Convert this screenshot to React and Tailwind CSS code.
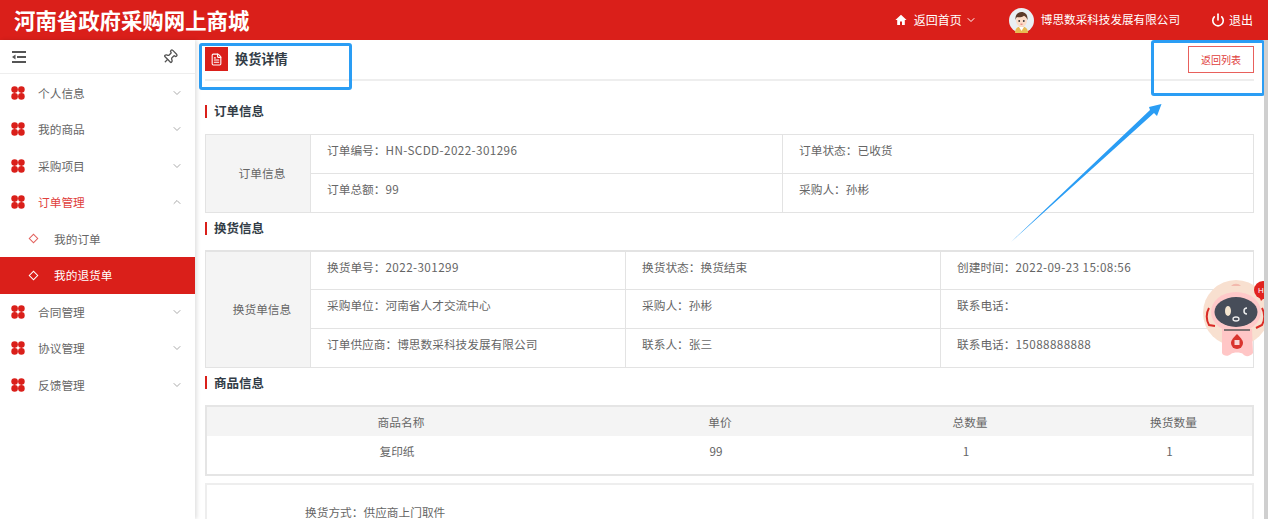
import React from "react";
import { ChevronDown, ChevronUp, FileText, Pin, Power } from "lucide-react";

const menus = [
  { name: "个人信息" },
  { name: "我的商品" },
  { name: "采购项目" },
  { name: "订单管理", open: true },
  { name: "我的订单", sub: true },
  { name: "我的退货单", sub: true, active: true },
  { name: "合同管理" },
  { name: "协议管理" },
  { name: "反馈管理" },
];

const Flower = () => (
  <svg width="14" height="14" viewBox="0 0 14 14" className="shrink-0">
    <circle cx="3.6" cy="3.6" r="3.3" fill="#da1f1a" />
    <circle cx="10.4" cy="3.6" r="3.3" fill="#da1f1a" />
    <circle cx="3.6" cy="10.4" r="3.3" fill="#da1f1a" />
    <circle cx="10.4" cy="10.4" r="3.3" fill="#da1f1a" />
  </svg>
);

const Avatar = () => (
  <svg width="25" height="25" viewBox="0 0 25 25" className="shrink-0">
    <circle cx="12.5" cy="12.5" r="12.5" fill="#e9eff3" />
    <path d="M6 25c0-5 3-6.5 6.5-6.5S19 20 19 25z" fill="#e8bb52" />
    <path d="M10 19h5l-2.500 4z" fill="#fff" />
    <ellipse cx="12.500" cy="12.500" rx="5.500" ry="6.500" fill="#fbdcc8" />
    <path d="M6.500 12C6 6.500 9 4 12.500 4s6.500 2.500 6 8c-.8-2-2-3.600-3.500-4.200C13 9.500 9 9.500 8 9c-.8.800-1.200 1.800-1.500 3z" fill="#5b3a29" />
    <circle cx="10.200" cy="13" r=".9" fill="#333" />
    <circle cx="14.800" cy="13" r=".9" fill="#333" />
    <path d="M11.500 16.200h2" stroke="#d9534f" strokeWidth=".8" />
  </svg>
);

const MenuFold = () => (
  <svg width="16" height="14" viewBox="0 0 16 14" className="shrink-0">
    <path d="M1 2h14M6 7h9M1 12h14" stroke="#555" strokeWidth="2" />
    <path d="M1 7l3.500-2.500v5z" fill="#555" />
  </svg>
);

const Robot = () => (
  <svg width="68" height="84" viewBox="0 0 68 84" className="absolute left-[1200px] top-[278px]">
    <circle cx="36" cy="35" r="33" fill="#f8e0d0" />
    <path d="M31 8a6 5 0 0 1 10 0z" fill="#f2b9ad" />
    <ellipse cx="36" cy="34" rx="25" ry="20" fill="#ffc9c9" />
    <ellipse cx="36" cy="34" rx="21.500" ry="15" fill="#474d59" />
    <ellipse cx="28" cy="33" rx="3" ry="5" fill="#f5e6d0" />
    <path d="M47 30c-4 0-4 6 0 6" fill="none" stroke="#eee" strokeWidth="1.500" />
    <ellipse cx="36" cy="41" rx="3" ry="2" fill="none" stroke="#eee" strokeWidth="1.300" />
    <path d="M9 30c-3 5-3 12 0 17l6 1" fill="none" stroke="#da2b26" strokeWidth="2" />
    <path d="M62 30c3 5 3 12 0 17l-6 3" fill="none" stroke="#da2b26" strokeWidth="2" />
    <path d="M22 51h30l1 24c-3 4-8 4-10 1-2-2-10-2-12 0-3 3-8 2-9-1z" fill="#ffc6c6" />
    <path d="M24 52h26" stroke="#555" strokeWidth="1.500" />
    <path d="M37 56c5 5 6 7 6 9a6 6 0 0 1-12 0c0-2 1-4 6-9z" fill="#d9342e" />
    <rect x="34.500" y="62" width="5" height="5" fill="#fff" opacity=".8" />
    <circle cx="63" cy="12" r="9" fill="#e1231f" />
    <path d="M59 18l2 5 4-4z" fill="#e1231f" />
    <text x="58" y="15" fontSize="8" fill="#fff" fontFamily="Liberation Sans, sans-serif">H</text>
  </svg>
);

const SectionTitle = ({ title, className }) => (
  <div className={`flex items-center h-4 ${className}`}>
    <span className="w-[2px] h-[13px] bg-[#da1f1a]" />
    <span className="ml-[7px] text-[12.5px] font-bold text-[#333d47]">{title}</span>
  </div>
);

// latin values sit a little wider than the CJK label
const Cell = ({ text }) => {
  const [label, value] = text.split("：");
  return (
    <>
      {label}：
      <span className={/^[\x00-\x7f]+$/.test(value) ? "tracking-[0.4px]" : ""}>{value}</span>
    </>
  );
};

const InfoTable = ({ label, rows, columns, rowClass, topClass }) => (
  <div className={`flex border border-[#e3e3e3] ${topClass}`}>
    <div className="w-[105px] shrink-0 bg-[#f4f4f4] border-r border-[#e3e3e3] flex items-center justify-center pl-[8px] pb-[2px]">
      {label}
    </div>
    <div className="flex-1">
      {rows.map((row, i) => (
        <div
          key={i}
          className={`grid ${rowClass} ${columns} ${i < rows.length - 1 ? "border-b border-[#e3e3e3]" : ""}`}
        >
          {row.map((cell, j) => (
            <div key={j} className={`pl-[16px] pt-[7px] leading-4 ${j > 0 ? "border-l border-[#e3e3e3]" : ""}`}>
              <Cell text={cell} />
            </div>
          ))}
        </div>
      ))}
    </div>
  </div>
);

export default function App() {
  return (
    <div
      className="relative w-full h-[519px] overflow-hidden bg-white text-[11.7px] text-[#666]"
      style={{ fontFamily: '"Noto Sans CJK SC", "Noto Sans", sans-serif' }}
    >
      <header className="h-[40px] bg-[#da1f1a] flex items-center text-white pl-[14px] pr-[15px]">
        <h1 className="text-[21.4px] font-bold">河南省政府采购网上商城</h1>
        <div className="ml-auto flex items-center">
          <svg width="12" height="12" viewBox="0 0 12 12" className="mr-[7px]">
            <path d="M6 .8L.4 6h1.800v5h2.800V7.500h2V11h2.800V6h1.800z" fill="#fff" />
          </svg>
          <span className="text-[12px]">返回首页</span>
          <ChevronDown size={12} className="ml-[3px]" />
          <span className="ml-[32px]"><Avatar /></span>
          <span className="ml-[7px] text-[11.6px]">博思数采科技发展有限公司</span>
          <Power size={14} strokeWidth={2.8} className="ml-[31px]" />
          <span className="ml-[4px] text-[12px]">退出</span>
        </div>
      </header>

      <div className="flex h-[479px]">
        <aside className="w-[195px] shrink-0 shadow-[2px_0_4px_rgba(0,0,0,0.12)] z-10 bg-white">
          <div className="h-[34px] mb-[0.5px] flex items-center justify-between pl-[11px] pr-[17px] border-b border-[#eeeeee]">
            <MenuFold />
            <Pin size={16} className="rotate-45 text-[#555]" />
          </div>
          {menus.map((m) => (
            <div
              key={m.name}
              className={`h-[36.5px] flex items-center ${m.active ? "bg-[#da1f1a] text-white" : ""} ${m.sub ? "pl-[30px]" : "pl-[11px] pr-[12px]"}`}
            >
              {m.sub ? (
                <>
                  <span
                    className={`w-[7px] h-[7px] rotate-45 border-[1.5px] ${m.active ? "border-white" : "border-[#e2605c]"}`}
                  />
                  <span className="ml-[17px]">{m.name}</span>
                </>
              ) : (
                <>
                  <Flower />
                  <span className={`ml-[13px] ${m.open ? "text-[#e0403c]" : ""}`}>{m.name}</span>
                  {m.open ? (
                    <ChevronUp size={12} className="ml-auto text-[#aaa]" />
                  ) : (
                    <ChevronDown size={12} className="ml-auto text-[#aaa]" />
                  )}
                </>
              )}
            </div>
          ))}
        </aside>

        <main className="flex-1 pl-[10px] pr-[14px]">
          <div className="h-[41px] flex justify-between border-b-2 border-[#eeeeee]">
            <div className="flex items-start pt-[7px]">
              <span className="w-[23px] h-[24px] bg-[#da1f1a] flex items-center justify-center">
                <FileText size={13} className="text-white" />
              </span>
              <span className="ml-[7px] text-[13.2px] leading-[24px] font-bold text-[#333d47]">换货详情</span>
            </div>
            <button className="mt-[6px] w-[66px] h-[27px] border border-[#e8605c] text-[10px] text-[#e0403c]">
              返回列表
            </button>
          </div>

          <SectionTitle title="订单信息" className="mt-[22px] mb-[15px]" />
          <InfoTable
            label="订单信息"
            columns="grid-cols-[471px_1fr]"
            rowClass="h-[38.5px]"
            rows={[
              ["订单编号：HN-SCDD-2022-301296", "订单状态：已收货"],
              ["订单总额：99", "采购人：孙彬"],
            ]}
          />

          <SectionTitle title="换货信息" className="mt-[7px] mb-[14px]" />
          <InfoTable
            label="换货单信息"
            columns="grid-cols-[314px_315px_1fr]"
            rowClass="h-[38.33px]"
            topClass="border-t-2"
            rows={[
              ["换货单号：2022-301299", "换货状态：换货结束", "创建时间：2022-09-23 15:08:56"],
              ["采购单位：河南省人才交流中心", "采购人：孙彬", "联系电话："],
              ["订单供应商：博思数采科技发展有限公司", "联系人：张三", "联系电话：15088888888"],
            ]}
          />

          <SectionTitle title="商品信息" className="mt-[7px] mb-[14px]" />
          <table className="w-full table-fixed border-2 border-[#e5e5e5] text-center">
            <thead>
              <tr className="h-[30px] bg-[#f4f4f4]">
                <th className="w-[389px] font-normal">商品名称</th>
                <th className="w-[250px] font-normal">单价</th>
                <th className="w-[250px] font-normal">总数量</th>
                <th className="font-normal">换货数量</th>
              </tr>
            </thead>
            <tbody>
              <tr className="h-[39px]">
                <td className="pr-[8px] pb-[9px]">复印纸</td>
                <td className="pr-[8px] pb-[9px]">99</td>
                <td className="pr-[8px] pb-[9px]">1</td>
                <td className="pr-[8px] pb-[9px]">1</td>
              </tr>
            </tbody>
          </table>

          <div className="mt-[7px] h-[60px] border-2 border-[#eeeeee] pl-[98px] pt-[20px] leading-[14px]">
            换货方式：供应商上门取件
          </div>
        </main>
      </div>

      <Robot />

      {/* annotations drawn over the screenshot */}
      <div className="absolute left-[199px] top-[43px] w-[153px] h-[47px] border-[3px] border-[#2a9df4] rounded-[3px]" />
      <div className="absolute left-[1151px] top-[40px] w-[114px] h-[56px] border-[3px] border-[#2a9df4] rounded-[3px]" />
      <div className="absolute left-[8px] top-[250px] w-[157px] h-[54px] border-[3px] border-[#2a9df4] rounded-[3px]" />
      <svg width="1268" height="519" className="absolute left-0 top-0 pointer-events-none">
        <path d="M1011 242L1150 110L1149 107L1161.500 104L1157 116L1154 113z" fill="#2a9df4" />
      </svg>

      <div className="absolute right-0 top-[40px] bottom-0 w-[4px] bg-[#cfcfcf]" />
    </div>
  );
}
